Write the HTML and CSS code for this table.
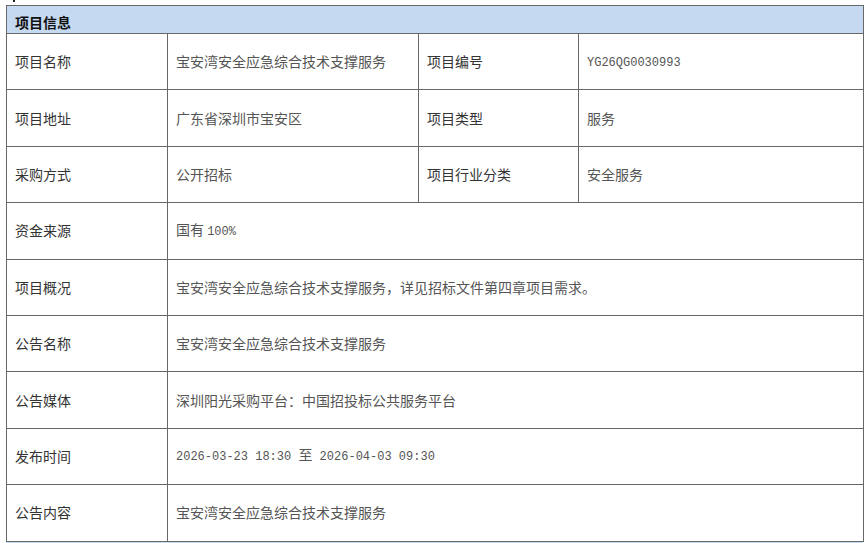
FILE: index.html
```html
<!DOCTYPE html>
<html lang="zh-CN">
<head>
<meta charset="utf-8">
<title>项目信息</title>
<link rel="stylesheet" href="styles.css">
</head>
<body>
<div class="page">
  <span class="mark"></span>
  <table class="info">
    <colgroup>
      <col class="c1"><col class="c2"><col class="c3"><col class="c4">
    </colgroup>
    <thead>
      <tr><th colspan="4">项目信息</th></tr>
    </thead>
    <tbody>
      <tr>
        <td class="label">项目名称</td>
        <td class="value">宝安湾安全应急综合技术支撑服务</td>
        <td class="label">项目编号</td>
        <td class="value"><span class="mono">YG26QG0030993</span></td>
      </tr>
      <tr>
        <td class="label">项目地址</td>
        <td class="value">广东省深圳市宝安区</td>
        <td class="label">项目类型</td>
        <td class="value">服务</td>
      </tr>
      <tr>
        <td class="label">采购方式</td>
        <td class="value">公开招标</td>
        <td class="label">项目行业分类</td>
        <td class="value">安全服务</td>
      </tr>
      <tr>
        <td class="label">资金来源</td>
        <td class="value" colspan="3">国有 <span class="mono">100%</span></td>
      </tr>
      <tr>
        <td class="label">项目概况</td>
        <td class="value" colspan="3">宝安湾安全应急综合技术支撑服务，详见招标文件第四章项目需求。</td>
      </tr>
      <tr>
        <td class="label">公告名称</td>
        <td class="value" colspan="3">宝安湾安全应急综合技术支撑服务</td>
      </tr>
      <tr>
        <td class="label">公告媒体</td>
        <td class="value" colspan="3">深圳阳光采购平台：中国招投标公共服务平台</td>
      </tr>
      <tr>
        <td class="label">发布时间</td>
        <td class="value" colspan="3"><span class="mono">2026-03-23 18:30 </span>至<span class="mono"> 2026-04-03 09:30</span></td>
      </tr>
      <tr>
        <td class="label">公告内容</td>
        <td class="value" colspan="3">宝安湾安全应急综合技术支撑服务</td>
      </tr>
    </tbody>
  </table>
  <div class="next"></div>
</div>
</body>
</html>
```

FILE: styles.css
```css
html, body {
  margin: 0;
  padding: 0;
  background: #fff;
}
body {
  font-family: "Noto Sans CJK SC", "Microsoft YaHei", sans-serif;
  font-size: 14px;
}
.page {
  position: relative;
  padding: 5px 0 0 6px;
}
.mark {
  position: absolute;
  left: 13px;
  top: 0;
  width: 2px;
  height: 2px;
  background: #222;
}
.info {
  border-collapse: collapse;
  table-layout: fixed;
  width: 857px;
}
.c1 { width: 161px; }
.c2 { width: 251px; }
.c3 { width: 160px; }
.c4 { width: 285px; }
.info th,
.info td {
  border: 1px solid #686868;
  padding: 0 8px;
  text-align: left;
  vertical-align: middle;
  line-height: 20px;
}
.info th {
  background: #c5d9f1;
  height: 23px;
  padding-top: 4px;
  padding-bottom: 0;
  font-weight: bold;
  color: #111;
}
.info tbody tr {
  height: 56.4px;
}
.info tbody td {
  padding-bottom: 1px;
}
.label {
  color: #333;
}
.value {
  color: #555;
}
.mono {
  font-family: "Liberation Mono", monospace;
  font-size: 12px;
}
.next {
  height: 4px;
  background: #c5d9f1;
  width: 857px;
}
```
